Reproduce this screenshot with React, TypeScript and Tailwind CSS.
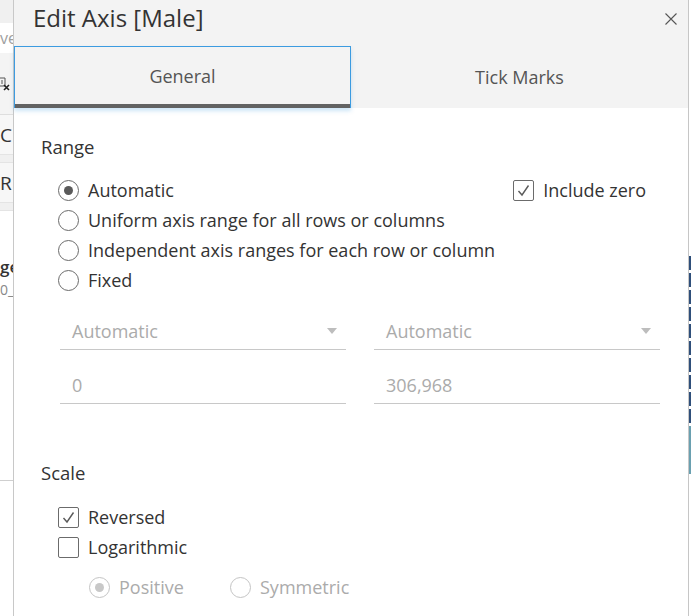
import React from "react";

const font = { fontFamily: "'Open Sans', 'Liberation Sans', sans-serif" };

function Radio({ checked, disabled }: { checked?: boolean; disabled?: boolean }) {
  return (
    <span
      className={`flex h-[21px] w-[21px] shrink-0 items-center justify-center rounded-full border bg-white ${
        disabled ? "border-[#c4c4c4]" : "border-[#6b6b6b]"
      }`}
    >
      {checked && (
        <span className={`h-[9px] w-[9px] rounded-full ${disabled ? "bg-[#c8c8c8]" : "bg-[#5a5a5a]"}`} />
      )}
    </span>
  );
}

function Checkbox({ checked }: { checked?: boolean }) {
  return (
    <span className="flex h-[21px] w-[21px] shrink-0 items-center justify-center rounded-[2px] border border-[#6b6b6b] bg-white">
      {checked && (
        <svg width="15" height="15" viewBox="0 0 15 15">
          <path d="M2.5 8 L6 12 L12.5 2.5" fill="none" stroke="#5a5a5a" strokeWidth="1.4" />
        </svg>
      )}
    </span>
  );
}

function Caret() {
  return (
    <svg width="10" height="6" viewBox="0 0 10 6">
      <path d="M0 0 H10 L5 6 Z" fill="#bdbdbd" />
    </svg>
  );
}

function LeftStrip() {
  return (
    <div className="flex w-[13px] shrink-0 flex-col overflow-hidden bg-white">
      <div className="h-[23px] bg-[#f0f0f0]" />
      <div className="flex h-[30px] items-center whitespace-nowrap bg-white text-[16px] leading-[18px] text-[#a0a0a0]">ve</div>
      <div className="flex h-[62px] items-center border-b border-[#dedede] bg-[#f4f4f4]">
        <svg width="13" height="16" viewBox="0 0 13 16">
          <path d="M0 2 H5 V10 H0" fill="none" stroke="#555" strokeWidth="1" />
          <path d="M2 4 V8" stroke="#555" strokeWidth="1" />
          <path d="M4 9 L9 14 M9 9 L4 14" stroke="#222" strokeWidth="1.6" />
        </svg>
      </div>
      <div className="flex h-[39px] items-center bg-[#f7f7f7] text-[19px] leading-[22px] text-[#333]">C</div>
      <div className="h-[9px] border-y border-[#e4e4e4] bg-[#f0f0f0]" />
      <div className="flex h-[39px] items-center bg-[#f7f7f7] text-[19px] leading-[22px] text-[#333]">R</div>
      <div className="h-[9px] border-y border-[#e4e4e4] bg-[#f0f0f0]" />
      <div className="h-[46px]" />
      <div className="flex h-[20px] items-center whitespace-nowrap text-[17px] leading-[20px] font-semibold text-[#333]">ge</div>
      <div className="mt-[3px] flex h-[20px] items-center whitespace-nowrap text-[14px] leading-[16px] text-[#888]">0_</div>
      <div className="h-[181px] border-b border-[#cfcfcf]" />
      <div className="flex-1" />
    </div>
  );
}

function RightStrip() {
  const segs = [257, 274, 291, 308, 325, 342, 359, 376, 393, 410];
  return (
    <div className="flex shrink-0">
      <div className="w-px bg-[#c6c6c6]" />
      <div className="flex w-[2px] flex-col bg-white">
        <div className="h-[256px]" />
        {segs.map((s) => (
          <div key={s} className="flex h-[17px] flex-col">
            <div className="h-[14px] bg-[#2f4f7a]" />
            <div className="h-[3px]" />
          </div>
        ))}
        <div className="h-[48px] bg-[#6aa0b0]" />
      </div>
    </div>
  );
}

export default function App() {
  return (
    <div className="flex h-[616px] w-[691px] overflow-hidden bg-white" style={font}>
      <LeftStrip />
      <div className="w-px shrink-0 bg-[#c8c8c8]" />
      <div className="flex flex-1 flex-col bg-white">
        {/* header */}
        <div className="bg-[#f3f3f3]">
          <div className="flex h-[46px] items-start justify-between pl-[19px] pr-[11px]">
            <div className="mt-[2px] text-[24px] leading-[32px] text-[#333]">Edit Axis [Male]</div>
            <svg className="mt-[13px]" width="12" height="12" viewBox="0 0 12 12">
              <path d="M0.5 0.5 L11.5 11.5 M11.5 0.5 L0.5 11.5" stroke="#555" strokeWidth="1.1" />
            </svg>
          </div>
          <div className="grid h-[62px] grid-cols-2">
            <div className="flex items-center justify-center border border-b-0 border-[#3c9be0] bg-[#f3f3f3] shadow-[0_3px_4px_rgba(60,155,224,0.25)]">
              <div className="flex h-full w-full flex-col">
                <div className="flex flex-1 items-center justify-center pt-[2px] text-[18px] text-[#555]">General</div>
                <div className="h-[4px] bg-[#626262]" />
              </div>
            </div>
            <div className="flex items-center justify-center pt-[1px] text-[18px] text-[#555]">Tick Marks</div>
          </div>
        </div>

        {/* content */}
        <div className="flex flex-col pl-[27px] text-[18px] text-[#333]">
          <div className="mt-[27px] h-[24px] text-[18.5px] leading-[24px]">Range</div>

          <div className="mt-[16px] flex flex-col pl-[17px]">
            <div className="flex h-[30px] items-center justify-between pr-[42px]">
              <div className="flex items-center gap-[9px]">
                <Radio checked />
                <span>Automatic</span>
              </div>
              <div className="flex items-center gap-[9px]">
                <Checkbox checked />
                <span>Include zero</span>
              </div>
            </div>
            <div className="flex h-[30px] items-center gap-[9px]">
              <Radio />
              <span>Uniform axis range for all rows or columns</span>
            </div>
            <div className="flex h-[30px] items-center gap-[9px]">
              <Radio />
              <span>Independent axis ranges for each row or column</span>
            </div>
            <div className="flex h-[30px] items-center gap-[9px]">
              <Radio />
              <span>Fixed</span>
            </div>
          </div>

          <div className="mt-[18px] grid grid-cols-2 gap-x-[28px] pl-[19px] pr-[28px] text-[#ababab]">
            <div className="flex h-[37px] items-center justify-between border-b border-[#c8c8c8] pl-[12px] pr-[9px]">
              <span>Automatic</span>
              <Caret />
            </div>
            <div className="flex h-[37px] items-center justify-between border-b border-[#c8c8c8] pl-[12px] pr-[9px]">
              <span>Automatic</span>
              <Caret />
            </div>
            <div className="mt-[17px] flex h-[37px] items-center border-b border-[#c8c8c8] pl-[12px]">
              <span>0</span>
            </div>
            <div className="mt-[17px] flex h-[37px] items-center border-b border-[#c8c8c8] pl-[12px]">
              <span>306,968</span>
            </div>
          </div>

          <div className="mt-[57px] h-[24px] text-[18.5px] leading-[24px]">Scale</div>

          <div className="mt-[17px] flex flex-col pl-[17px]">
            <div className="flex h-[30px] items-center gap-[9px]">
              <Checkbox checked />
              <span>Reversed</span>
            </div>
            <div className="flex h-[30px] items-center gap-[9px]">
              <Checkbox />
              <span>Logarithmic</span>
            </div>
            <div className="mt-[10px] flex h-[30px] items-center pl-[31px] text-[#ababab]">
              <div className="flex w-[141px] items-center gap-[9px]">
                <Radio checked disabled />
                <span>Positive</span>
              </div>
              <div className="flex items-center gap-[9px]">
                <Radio disabled />
                <span>Symmetric</span>
              </div>
            </div>
          </div>
        </div>
      </div>
      <RightStrip />
    </div>
  );
}
